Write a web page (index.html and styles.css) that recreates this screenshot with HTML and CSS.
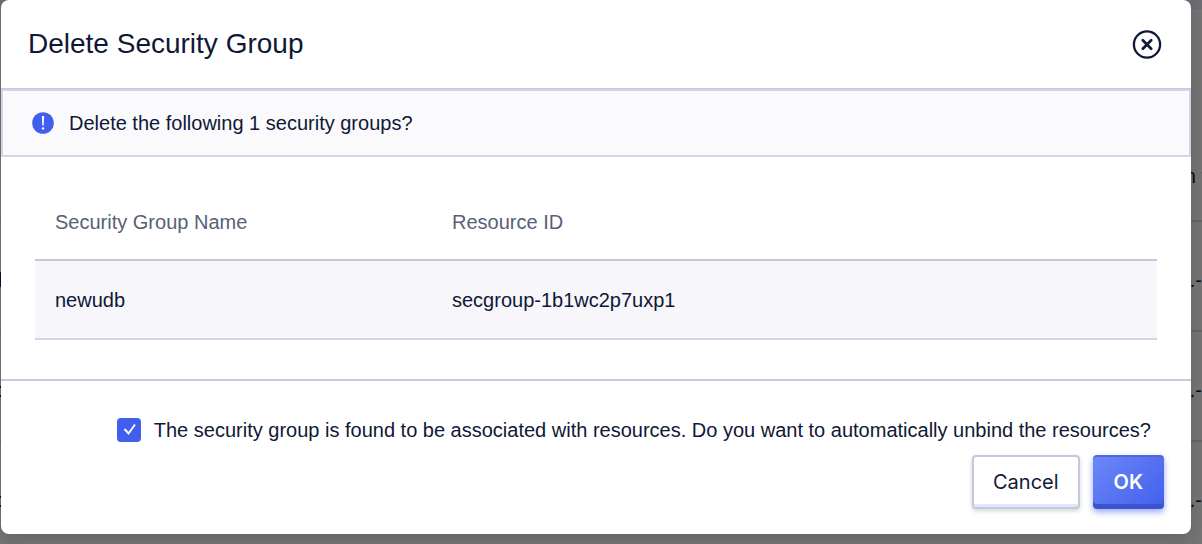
FILE: index.html
```html
<!DOCTYPE html>
<html lang="en">

<head>
	<meta charset="UTF-8">
	<meta name="viewport" content="width=device-width, initial-scale=1.0">
	<title>Delete Security Group</title>
	<link rel="stylesheet" href="styles.css">
</head>

<body>
	<div class="backdrop" aria-hidden="true">
		<div class="backdrop-bar"></div>
		<div class="backdrop-row"><span></span><span class="cut">n&nbsp;t</span></div>
		<div class="backdrop-row"><span>l</span><span>.-</span></div>
		<div class="backdrop-row"><span>:</span><span>.-</span></div>
		<div class="backdrop-row"><span>:</span><span>.-</span></div>
	</div>

	<div class="modal" role="dialog" aria-labelledby="modal-title">
		<div class="modal-header">
			<h2 id="modal-title">Delete Security Group</h2>
			<button class="close" type="button" aria-label="Close">
				<svg viewBox="0 0 30 30" width="30" height="30" fill="none" stroke="currentColor">
					<circle cx="15" cy="15.5" r="13.1" stroke-width="2.3" />
					<path d="M10.8 11.3l8.4 8.4M19.2 11.3l-8.4 8.4" stroke-width="2.7" stroke-linecap="round" />
				</svg>
			</button>
		</div>

		<div class="alert">
			<svg viewBox="0 0 22 22" width="22" height="22">
				<circle cx="11" cy="11" r="10.8" fill="#415fec" />
				<path d="M9.9 4h2.2l-.4 9.4h-1.4z" fill="#fff" />
				<circle cx="11" cy="16.4" r="1.2" fill="#fff" />
			</svg>
			<p>Delete the following 1 security groups?</p>
		</div>

		<div class="modal-content">
			<table>
				<thead>
					<tr>
						<th class="name" scope="col">Security Group Name</th>
						<th scope="col">Resource ID</th>
					</tr>
				</thead>
				<tbody>
					<tr>
						<td>newudb</td>
						<td>secgroup-1b1wc2p7uxp1</td>
					</tr>
				</tbody>
			</table>
		</div>

		<div class="modal-footer">
			<div class="option">
				<input type="checkbox" id="unbind" class="checkbox" checked>
				<label for="unbind">The security group is found to be associated with resources. Do you want to automatically unbind the resources?</label>
			</div>
			<div class="actions">
				<button class="btn" type="button">Cancel</button>
				<button class="btn btn-primary" type="button">OK</button>
			</div>
		</div>
	</div>
</body>

</html>
```
FILE: styles.css
```css
* {
	box-sizing: border-box;
}

body {
	background-color: #747474;
	color: #0f1836;
	font-family: "Liberation Sans", Arial, sans-serif;
	font-size: 20px;
	line-height: 24px;
	margin: 0;
	min-height: 100vh;
	overflow: hidden;
}

/* dimmed page behind the dialog */
.backdrop {
	position: absolute;
	inset: 0;
	overflow: hidden;
}

.backdrop-bar {
	background-color: #6c6d72;
	height: 9px;
	margin-bottom: 103px;
}

.backdrop-row {
	border-bottom: 2px solid #63626e;
	color: #080b1b;
	display: flex;
	align-items: center;
	justify-content: space-between;
	height: 110px;
	padding-top: 8px;
}

.backdrop-row span:first-child {
	margin-left: -2px;
}

.backdrop-row .cut {
	margin-right: -5px;
	padding-top: 12px;
}

.modal {
	position: relative;
	background-color: #fff;
	border-radius: 8px;
	box-shadow: 0 4px 16px rgba(0, 0, 0, 0.15);
	margin: 0 11px 0 1px;
}

.modal-header {
	border-bottom: 1px solid #c4c9dc;
	display: flex;
	align-items: center;
	justify-content: space-between;
	height: 89px;
	padding: 0 29px 0 27px;
}

.modal-header h2 {
	font-size: 28px;
	font-weight: 400;
	line-height: 32px;
	margin: 0;
}

.close {
	background: none;
	border: none;
	color: inherit;
	cursor: pointer;
	display: flex;
	padding: 0;
}

.alert {
	background-color: #fafafd;
	border: 2px solid #d2d5e9;
	display: flex;
	align-items: center;
	gap: 15px;
	padding: 20px 29px;
}

.alert p {
	margin: 0;
}

.modal-content {
	padding: 28px 34px 39px;
}

table {
	border-collapse: collapse;
	table-layout: fixed;
	width: 100%;
}

th,
td {
	font-weight: 400;
	padding: 0 20px;
	text-align: left;
}

th {
	border-bottom: 2px solid #c3c8da;
	color: #566176;
	height: 75px;
}

.name {
	width: 397px;
}

td {
	background-color: #f6f6fb;
	border-bottom: 2px solid #d2d5e9;
	height: 79px;
}

.modal-footer {
	border-top: 2px solid #c7cade;
	padding: 37px 27px 25px;
}

.option {
	display: flex;
	align-items: center;
	justify-content: flex-end;
	gap: 13px;
	margin-bottom: 13px;
	padding-right: 13px;
}

.checkbox {
	appearance: none;
	background: #415fec url("data:image/svg+xml,%3Csvg xmlns='http://www.w3.org/2000/svg' viewBox='0 0 24 24'%3E%3Cpath d='M7.5 11l4 4.5 6.5-9' fill='none' stroke='%23fff' stroke-width='2'/%3E%3C/svg%3E") center / 24px no-repeat;
	border-radius: 4px;
	flex: none;
	height: 24px;
	margin: 0;
	width: 24px;
}

.actions {
	display: flex;
	justify-content: flex-end;
	gap: 13px;
}

.btn {
	background-color: #fff;
	border: 2px solid #c3c8da;
	border-radius: 4px;
	box-shadow: inset 0 -3px #e1e7fb, 0 2px 4px rgba(15, 24, 54, 0.18);
	color: inherit;
	cursor: pointer;
	font-family: Inter, sans-serif;
	font-size: 20px;
	height: 54px;
	padding: 0 19px;
}

.btn-primary {
	background-image: linear-gradient(135deg, #6e87f8, #415fec);
	border: none;
	box-shadow: inset 0 2px #5068d2, inset 0 -5px #3c53cb, 0 3px 6px rgba(65, 95, 236, 0.55);
	color: #fff;
	font-weight: 600;
	padding: 0 21px;
}
```
